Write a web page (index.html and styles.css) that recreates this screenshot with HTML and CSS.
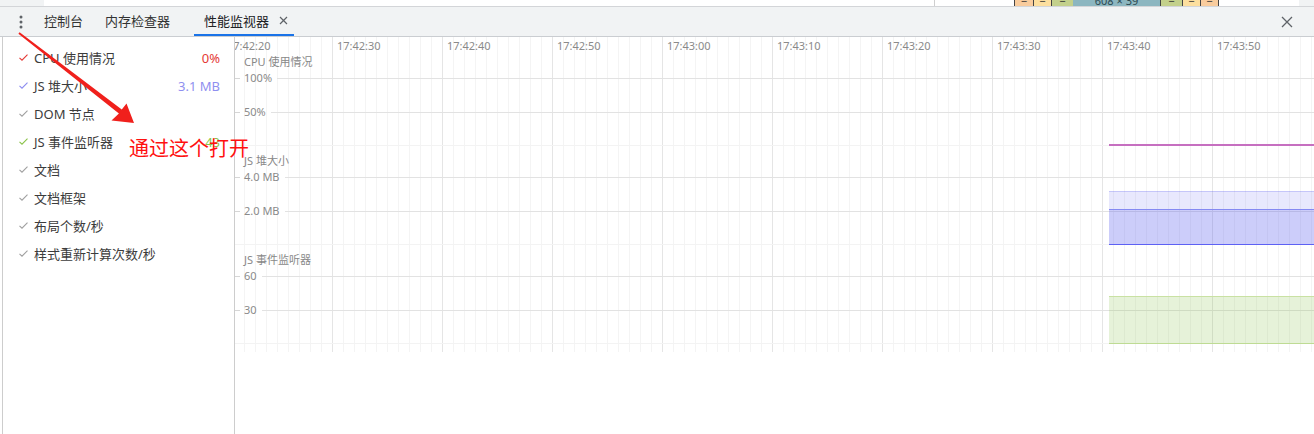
FILE: index.html
```html
<!DOCTYPE html>
<html lang="zh-CN">
<head>
<meta charset="utf-8">
<title>性能监视器</title>
<link rel="stylesheet" href="styles.css">
</head>
<body>
<div class="strip">
  <div class="strip-a"></div>
  <div class="strip-b"></div>
  <div class="strip-c"></div>
  <div class="boxes">
    <span class="bx orange dl">−</span>
    <span class="bx yellow">−</span>
    <span class="bx green">−</span>
    <span class="bx teal">608 × 39</span>
    <span class="bx green">−</span>
    <span class="bx yellow">−</span>
    <span class="bx orange dr">−</span>
  </div>
  <div class="strip-d"></div>
  <div class="strip-e"></div>
</div>

<div class="tabbar">
  <div class="menu">
    <svg width="4" height="14" viewBox="0 0 4 14"><circle cx="2" cy="2" r="1.5"/><circle cx="2" cy="7" r="1.5"/><circle cx="2" cy="12" r="1.5"/></svg>
  </div>
  <div class="tab">控制台</div>
  <div class="tab tab2">内存检查器</div>
  <div class="tab active">性能监视器
    <svg class="tabx" width="9" height="9" viewBox="0 0 9 9"><path d="M1 1L8 8M8 1L1 8"/></svg>
  </div>
  <div class="spacer"></div>
  <div class="close">
    <svg width="12" height="12" viewBox="0 0 12 12"><path d="M1 1L11 11M11 1L1 11"/></svg>
  </div>
</div>

<div class="main">
  <div class="side">
    <div class="row"><svg class="chk red" viewBox="0 0 9 7"><path d="M0.5 3.8L3 6.2L8.5 0.6"/></svg><span class="name">CPU 使用情况</span><span class="val v-red">0%</span></div>
    <div class="row"><svg class="chk blue" viewBox="0 0 9 7"><path d="M0.5 3.8L3 6.2L8.5 0.6"/></svg><span class="name">JS 堆大小</span><span class="val v-blue">3.1 MB</span></div>
    <div class="row"><svg class="chk gray" viewBox="0 0 9 7"><path d="M0.5 3.8L3 6.2L8.5 0.6"/></svg><span class="name">DOM 节点</span><span class="val"></span></div>
    <div class="row"><svg class="chk green" viewBox="0 0 9 7"><path d="M0.5 3.8L3 6.2L8.5 0.6"/></svg><span class="name">JS 事件监听器</span><span class="val v-green">43</span></div>
    <div class="row"><svg class="chk gray" viewBox="0 0 9 7"><path d="M0.5 3.8L3 6.2L8.5 0.6"/></svg><span class="name">文档</span><span class="val"></span></div>
    <div class="row"><svg class="chk gray" viewBox="0 0 9 7"><path d="M0.5 3.8L3 6.2L8.5 0.6"/></svg><span class="name">文档框架</span><span class="val"></span></div>
    <div class="row"><svg class="chk gray" viewBox="0 0 9 7"><path d="M0.5 3.8L3 6.2L8.5 0.6"/></svg><span class="name">布局个数/秒</span><span class="val"></span></div>
    <div class="row"><svg class="chk gray" viewBox="0 0 9 7"><path d="M0.5 3.8L3 6.2L8.5 0.6"/></svg><span class="name">样式重新计算次数/秒</span><span class="val"></span></div>
  </div>

  <div class="charts">
    <div class="grid">
      <div class="times">
        <span class="t first">17:42:20</span>
        <span class="t">17:42:30</span>
        <span class="t">17:42:40</span>
        <span class="t">17:42:50</span>
        <span class="t">17:43:00</span>
        <span class="t">17:43:10</span>
        <span class="t">17:43:20</span>
        <span class="t">17:43:30</span>
        <span class="t">17:43:40</span>
        <span class="t">17:43:50</span>
      </div>

      <section class="chart">
        <div class="ctitle">CPU 使用情况</div>
        <div class="gline first-line"><i class="tick"></i><span class="glabel">100%</span><i class="rule"></i></div>
        <div class="gline second-line"><i class="tick"></i><span class="glabel">50%</span><i class="rule"></i></div>
        <div class="base"></div>
        <div class="cpu-line"></div>
      </section>

      <section class="chart">
        <div class="ctitle">JS 堆大小</div>
        <div class="gline first-line"><i class="tick"></i><span class="glabel">4.0 MB</span><i class="rule"></i></div>
        <div class="gline second-line"><i class="tick"></i><span class="glabel">2.0 MB</span><i class="rule"></i></div>
        <div class="base"></div>
        <div class="heap-total"></div>
        <div class="heap-used"></div>
      </section>

      <section class="chart">
        <div class="ctitle">JS 事件监听器</div>
        <div class="gline first-line"><i class="tick"></i><span class="glabel">60</span><i class="rule"></i></div>
        <div class="gline second-line"><i class="tick"></i><span class="glabel">30</span><i class="rule"></i></div>
        <div class="base"></div>
        <div class="listeners"></div>
      </section>
    </div>
  </div>
</div>

<svg class="annot" width="1314" height="434" viewBox="0 0 1314 434">
  <polygon points="19.6,32.2 121.8,109.6 126.5,103.5 134,123 111.5,120.5 118.9,113.5 18.4,33.8"/>
</svg>
<div class="annot-text">通过这个打开</div>
</body>
</html>
```

FILE: styles.css
```css
* { box-sizing: border-box; }

body {
  margin: 0;
  width: 1314px;
  height: 434px;
  overflow: hidden;
  position: relative;
  background: #ffffff;
  color: #333333;
  font-family: "Noto Sans", "Noto Sans CJK SC", sans-serif;
}

/* top strip (page behind devtools) */
.strip {
  display: flex;
  height: 7px;
  border-bottom: 1px solid #d3d5d8;
  overflow: hidden;
}
.strip-a { width: 44px; background: #f1f3f4; }
.strip-b { width: 891px; border-right: 1px solid #cfcfcf; }
.strip-c { width: 79px; }
.strip-d { width: 80px; }
.strip-e { flex: 1; background: #f1f3f4; }
.boxes { display: flex; }
.bx {
  display: block;
  height: 6px;
  overflow: hidden;
  font-size: 11px;
  line-height: 1px;
  text-align: center;
  color: #333;
  border-left: 1px dashed #444;
}
.bx.orange { background: #f9cc9d; width: 19px; }
.bx.yellow { background: #fddf9e; width: 18px; }
.bx.green { background: #c3d08b; width: 22px; }
.bx.teal { background: #8cb6c0; width: 87px; border-left: none; color: #2e4a52; }
.bx.dl { border-left: 1px dashed #444; }
.bx.dr { border-right: 1px dashed #444; }

/* tab bar */
.tabbar {
  display: flex;
  align-items: stretch;
  height: 30px;
  background: #f1f3f4;
  border-bottom: 1px solid #cacdd1;
  font-size: 13px;
  line-height: 18px;
  color: #333333;
}
.menu {
  width: 34px;
  padding-left: 19px;
  display: flex;
  align-items: center;
}
.menu svg { fill: #5f6368; }
.tab {
  display: flex;
  align-items: center;
  padding: 0 10px;
  border-bottom: 2px solid transparent;
  white-space: nowrap;
}
.tab2 { margin-left: 2px; }
.tab.active {
  margin-left: 14px;
  padding: 0 6px 0 10px;
  width: 100px;
  border-bottom-color: #1a73e8;
  color: #202124;
}
.tabx {
  margin-left: 10px;
  stroke: #5f6368;
  stroke-width: 1.2;
  fill: none;
}
.spacer { flex: 1; }
.close {
  width: 34px;
  display: flex;
  align-items: center;
  padding-left: 1px;
}
.close svg {
  stroke: #5f6368;
  stroke-width: 1.3;
  fill: none;
}

/* main area */
.main {
  display: flex;
  height: 397px;
  padding-left: 2px;
}
.side {
  width: 233px;
  border-left: 1px solid #cdcdcd;
  border-right: 1px solid #cdcdcd;
  padding-top: 7px;
}
.row {
  display: flex;
  align-items: center;
  height: 28px;
  padding: 0 14px 0 16px;
  font-size: 13px;
  line-height: 18px;
  color: #3c3c3c;
}
.chk {
  width: 9px;
  height: 7px;
  margin-right: 6px;
  margin-top: -2px;
  fill: none;
  stroke-width: 1.1;
}
.chk.red { stroke: #e53935; }
.chk.blue { stroke: #8c8cf0; }
.chk.gray { stroke: #a0a0a0; }
.chk.green { stroke: #8bc34a; }
.name { flex: 1; white-space: nowrap; }
.val { text-align: right; white-space: nowrap; }
.v-red { color: #e53935; }
.v-blue { color: #8f8ff0; }
.v-green { color: #8bc34a; }

/* charts */
.charts {
  flex: 1;
  overflow: hidden;
  background: #ffffff;
}
.grid {
  height: 315px;
  background-image:
    linear-gradient(to right, #e5e5e5 0, #e5e5e5 1px, transparent 1px),
    linear-gradient(to right, #f4f4f4 0, #f4f4f4 1px, transparent 1px);
  background-size: 110px 100%, 11px 100%;
  background-position: 97px 0, 9px 0;
  background-repeat: repeat-x;
}
.times {
  display: flex;
  height: 17px;
  font-size: 11px;
  line-height: 17px;
  color: #8a8a8a;
  white-space: nowrap;
}
.t { flex: 0 0 110px; }
.t.first { margin-left: -8px; }

.chart {
  position: relative;
  height: 99px;
}
.ctitle {
  height: 16px;
  padding-left: 9px;
  font-size: 11px;
  line-height: 16px;
  color: #888888;
  white-space: nowrap;
}
.gline {
  display: flex;
  align-items: center;
  height: 12px;
}
.first-line { margin-top: 2px; }
.second-line { margin-top: 22px; }
.tick {
  width: 5px;
  height: 1px;
  background: #d6d6d6;
}
.rule {
  flex: 1;
  height: 1px;
  background: #e2e2e2;
}
.glabel {
  padding: 0 5px 0 4px;
  font-size: 11px;
  line-height: 12px;
  color: #8a8a8a;
  white-space: nowrap;
}
.base {
  margin-top: 27px;
  height: 1px;
  background: #f3f3f3;
}

.cpu-line {
  position: absolute;
  left: 874px;
  right: 0;
  top: 90px;
  height: 2px;
  background: #c66fc0;
}
.heap-total {
  position: absolute;
  left: 874px;
  right: 0;
  top: 38px;
  height: 18px;
  background: rgba(90, 95, 240, 0.14);
  border-top: 1px solid rgba(90, 95, 240, 0.25);
}
.heap-used {
  position: absolute;
  left: 874px;
  right: 0;
  top: 56px;
  height: 36px;
  background: rgba(90, 95, 240, 0.31);
  border-top: 1px solid #8589f2;
  border-bottom: 1px solid #5d61f4;
}
.listeners {
  position: absolute;
  left: 874px;
  right: 0;
  top: 44px;
  height: 48px;
  background: rgba(139, 195, 74, 0.21);
  border-top: 1px solid #c9e1a3;
  border-bottom: 1px solid #bedb94;
}

/* annotation overlay */
.annot {
  position: absolute;
  left: 0;
  top: 0;
  pointer-events: none;
  fill: #f0201c;
}
.annot-text {
  position: absolute;
  left: 129px;
  top: 136px;
  font-family: "Noto Sans CJK SC", sans-serif;
  font-size: 20px;
  line-height: 24px;
  color: #ff1010;
  white-space: nowrap;
}
```
